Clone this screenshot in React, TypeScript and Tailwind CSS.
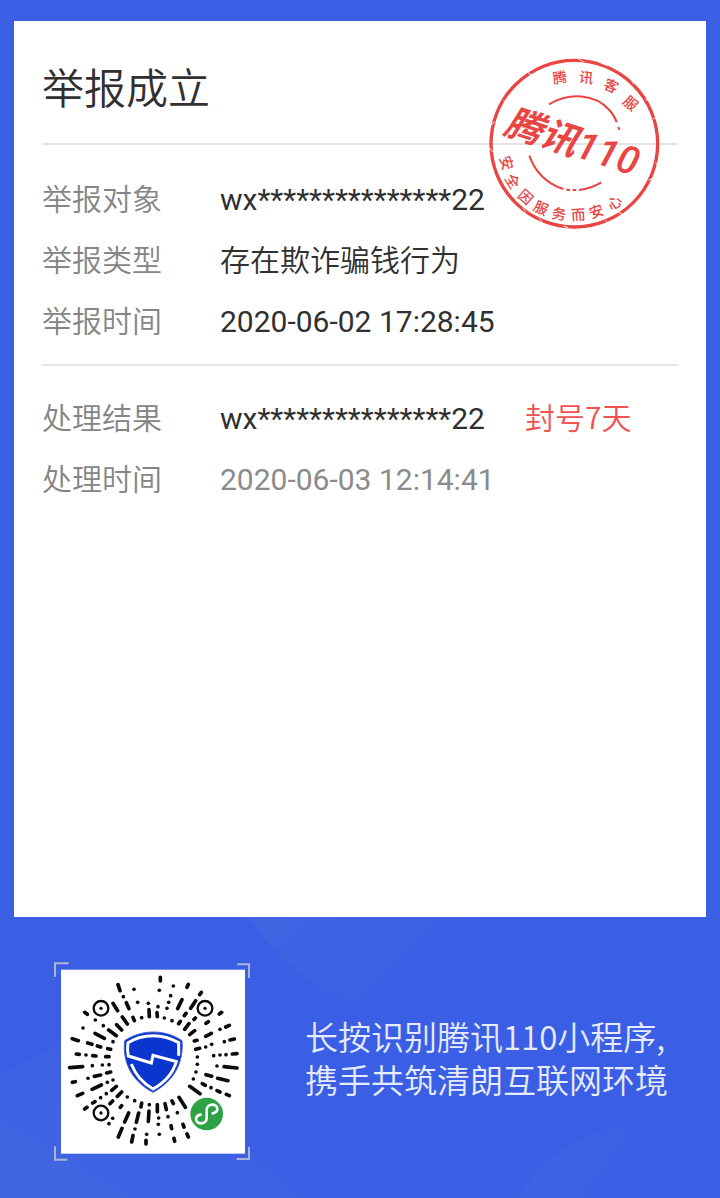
const codeStrokes =
  "M204 80L210 98M189 136L203 158M229 134L237 152M297 155L298 176M104 163L112 169M217 177L232 198M249 178L253 188M200 200L215 216M176 216L199 233M135 226L163 241M67 242L85 248M113 255L126 259M142 264L152 267M173 272L182 274M79 288L88 289M128 293L138 294M167 296L177 296" +
  "M331 58L331 69M415 79L411 88M454 103L449 110M396 125L383 152M437 128L422 151M321 164L322 176M408 166L403 173M391 190L386 197M436 180L432 184M515 163L508 168M475 191L468 196M417 197L404 214M434 218L419 230M484 226L467 235M538 202L527 207M433 249L441 247M540 246L553 243M437 274L449 271M547 288L561 287" +
  "M59 329L98 326M67 373L76 371M133 355L152 351M170 345L182 342M126 394L154 381M82 413L98 406M185 397L199 385M202 415L215 402M128 435L135 431M104 453L111 448M180 437L188 429M211 448L215 443M236 465L224 492M275 435L273 447M266 465L259 493M297 459L295 490M216 511L205 537M249 533L245 552M288 547L288 558" +
  "M522 326L561 330M468 350L485 355M503 361L534 368M457 377L466 382M501 398L510 402M529 409L538 413M419 385L450 407M387 418L406 448M366 429L370 437M345 437L349 455M322 440L322 461M363 503L365 512M399 499L402 507M372 541L374 550M411 528L415 537";

const codeDots = [
  [252, 94], [220, 116], [263, 133], [295, 136], [136, 186], [99, 210], [275, 179], [160, 203], [189, 251], [108, 291],
  [328, 97], [370, 84], [362, 113], [356, 133], [351, 151], [324, 146], [343, 180], [366, 188], [510, 214], [467, 267],
  [485, 259], [523, 251], [442, 297], [491, 293], [510, 291], [528, 290], [127, 323], [157, 321], [177, 320], [114, 361],
  [172, 373], [189, 366], [152, 419], [169, 407], [232, 417], [254, 428], [188, 481], [177, 497], [298, 440], [255, 513],
  [290, 529], [442, 319], [501, 324], [438, 342], [430, 363], [483, 389], [326, 480], [325, 499], [328, 529], [354, 476],
  [382, 464],
];

const finders = [[153, 151], [465, 151], [153, 465]];

function MiniProgramCode() {
  return (
    <svg viewBox="0 0 615 615" className="size-[205px] shrink-0" role="img" aria-label="小程序码">
      <path
        d="M15 57V16H56M562 19H597V60M15 565V605H52M560 603H597V566"
        fill="none"
        stroke="#a9b5d6"
        strokeWidth="6"
      />
      <rect x="33" y="35" width="552" height="552" fill="#fff" />
      <path d={codeStrokes} fill="none" stroke="#0b0b0b" strokeWidth="11" strokeLinecap="round" />
      {codeDots.map(([x, y]) => (
        <circle key={`${x}-${y}`} cx={x} cy={y} r="5.5" fill="#0b0b0b" />
      ))}
      {finders.map(([x, y]) => (
        <g key={`${x}-${y}`}>
          <circle cx={x} cy={y} r="22" fill="#fff" stroke="#0b0b0b" strokeWidth="7" />
          <circle cx={x} cy={y} r="5" fill="#0b0b0b" />
        </g>
      ))}
      <path
        d="M310 222C340 222 372 231 396 248C402 318 368 372 309 403C250 372 216 318 224 248C248 231 280 222 310 222Z"
        fill="#0a35cf"
        stroke="#4a66cf"
        strokeWidth="3"
      />
      <path
        d="M386 293V254C362 240 338 233 310 233C282 233 256 240 234 254C232 268 232 281 235 294L304 315L309 292L379 311C368 348 342 375 309 393C278 375 256 350 244 318"
        fill="none"
        stroke="#fff"
        strokeWidth="9"
      />
      <circle cx="470" cy="468" r="49" fill="#2ba245" />
      <path
        d="M488 466C497 464 502 459 502 453C502 445 495 440 487 440C478 440 470 446 470 455V481C470 490 462 496 453 496C445 496 438 491 438 483C438 477 443 472 452 470"
        fill="none"
        stroke="#fff"
        strokeWidth="8"
        strokeLinecap="round"
      />
    </svg>
  );
}

const stampTop = [
  ["腾", 239, 82, -9], ["讯", 319, 83, 7], ["客", 394, 107, 24], ["服", 452, 160, 40],
] as const;

const stampBottom = [
  ["安", 80, 339, 74], ["全", 98, 393, 57], ["因", 137, 441, 41], ["服", 183, 474, 25],
  ["务", 237, 492, 10], ["而", 295, 494, -4], ["安", 349, 484, -19], ["心", 404, 458, -35],
] as const;

function Stamp() {
  return (
    <svg
      viewBox="0 0 570 570"
      className="absolute top-[29px] right-9 size-[190px]"
      fill="#ea4443"
      fontFamily="'Noto Sans CJK SC', sans-serif"
      textAnchor="middle"
    >
      <g fill="none" stroke="#ea4443">
        <circle cx="283" cy="281" r="250" strokeWidth="10" />
        <path d="M207 163C270 126 345 132 388 180Q404 197 410 217M415 231L418 240" strokeWidth="6" />
        <path d="M148 317C165 367 203 403 250 417M259 419L270 420M278 420L289 420M297 420Q333 416 364 397" strokeWidth="6" />
      </g>
      <g fill="none" stroke="#fff" strokeWidth="3">
        <path d="M70 150L80 160M142 66L158 78M352 34L382 47M497 150L509 148M520 205L538 206M526 338L540 350M506 390L522 384M415 486L436 499M250 528L264 533M90 430L104 436M28 294L38 305M35 225L43 215" />
        <path d="M295 28L312 35M455 94L463 104M377 510L384 524M130 474L138 487M176 502L190 521" strokeWidth="2" />
      </g>
      {stampTop.map(([ch, x, y, a]) => (
        <text key={x} transform={`translate(${x} ${y}) rotate(${a})`} y="16" fontSize="43" fontWeight="500">
          {ch}
        </text>
      ))}
      <text transform="translate(276 277) rotate(18)" y="38" fontSize="112" fontWeight="700" fontStyle="italic">
        腾讯
        <tspan fontFamily="Roboto, sans-serif" fontSize="116" fontWeight="500">110</tspan>
      </text>
      {stampBottom.map(([ch, x, y, a]) => (
        <text key={x} transform={`translate(${x} ${y}) rotate(${a})`} y="16" fontSize="43" fontWeight="500">
          {ch}
        </text>
      ))}
    </svg>
  );
}

function Row({ label, value, muted, note }: { label: string; value: string; muted?: boolean; note?: string }) {
  return (
    <div className="flex h-[61px] items-baseline text-[30px] leading-[61px]">
      <dt className="w-[178px] shrink-0 font-['Noto_Sans_CJK_SC_DemiLight','Noto_Sans_CJK_SC',sans-serif] font-[350] text-[#858585]">
        {label}
      </dt>
      <dd className={muted ? "text-[#8b8b8b]" : "text-[#303030]"}>{value}</dd>
      {note && (
        <dd className="ml-10 font-['Noto_Sans_CJK_SC_DemiLight','Noto_Sans_CJK_SC',sans-serif] font-[350] text-[#f0504f]">
          {note}
        </dd>
      )}
    </div>
  );
}

export default function App() {
  return (
    <div className="relative isolate min-h-screen overflow-hidden bg-[#3a5fe5] px-[14px] pt-[21px] pb-[35px] font-[Roboto,'Noto_Sans_CJK_SC_DemiLight','Noto_Sans_CJK_SC',sans-serif]">
      <svg className="absolute bottom-0 left-0 -z-10 h-[298px] w-full" viewBox="0 0 720 298" preserveAspectRatio="none">
        <defs>
          <linearGradient id="arc" x1="0" y1="0" x2="1" y2="0.3">
            <stop offset="0" stopColor="#4265e2" />
            <stop offset="0.7" stopColor="#3a5fe5" />
          </linearGradient>
          <linearGradient id="corner" x1="0" y1="1" x2="0.8" y2="0.2">
            <stop offset="0" stopColor="#4265e1" />
            <stop offset="1" stopColor="#3a5fe5" />
          </linearGradient>
        </defs>
        <path d="M248 16C275 58 318 95 372 112L560 16Z" fill="url(#arc)" />
        <path d="M0 175L110 120L300 298H0Z" fill="url(#corner)" />
        <path d="M518 298C540 255 595 220 690 212L720 298Z" fill="url(#arc)" />
      </svg>
      <main className="relative min-h-[896px] bg-white px-7">
        <h1 className="flex h-[122px] items-center pt-1.5 font-['Noto_Sans_CJK_SC_DemiLight','Noto_Sans_CJK_SC',sans-serif] text-[42px] font-[350] text-[#303030]">
          举报成立
        </h1>
        <hr className="border-t-2 border-[#e4e4e4]" />
        <dl className="pt-[22px] pb-[14px]">
          <Row label="举报对象" value="wx***************22" />
          <Row label="举报类型" value="存在欺诈骗钱行为" />
          <Row label="举报时间" value="2020-06-02 17:28:45" />
        </dl>
        <hr className="border-t-2 border-[#e4e4e4]" />
        <dl className="pt-5">
          <Row label="处理结果" value="wx***************22" note="封号7天" />
          <Row label="处理时间" value="2020-06-03 12:14:41" muted />
        </dl>
        <Stamp />
      </main>
      <footer className="mt-[41px] flex items-center gap-[50px] pl-9">
        <MiniProgramCode />
        <p className="pb-1.5 font-['Noto_Sans_CJK_SC_DemiLight','Noto_Sans_CJK_SC',sans-serif] text-[33px] leading-[43px] font-[350] whitespace-nowrap text-[#e6ebff]">
          长按识别腾讯110小程序,
          <br />
          携手共筑清朗互联网环境
        </p>
      </footer>
    </div>
  );
}
